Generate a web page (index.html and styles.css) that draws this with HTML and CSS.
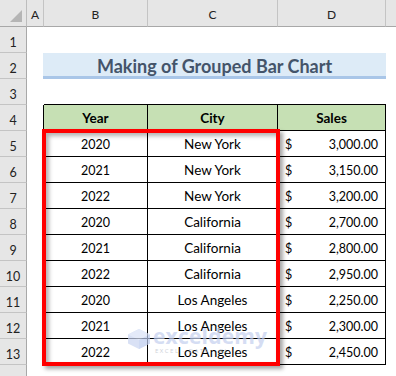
FILE: index.html
```html
<!DOCTYPE html>
<html>
<head>
<meta charset="utf-8">
<link rel="stylesheet" href="styles.css">
</head>
<body>
<div class="wrap">
  <div class="sheet">
    <div class="corner"><span class="tri"></span></div>
    <div class="ch">A</div><div class="ch">B</div><div class="ch">C</div><div class="ch">D</div><div class="ch last"></div>

    <div class="rh">1</div><div class="c"></div><div class="c"></div><div class="c"></div><div class="c"></div><div class="c"></div>
    <div class="rh">2</div><div class="c"></div>
    <div class="title">Making of Grouped Bar Chart</div>
    <div class="c"></div>
    <div class="rh">3</div><div class="c"></div><div class="c tb"></div><div class="c tb"></div><div class="c tb"></div><div class="c"></div>
    <div class="rh">4</div><div class="c tl"></div>
    <div class="t th">Year</div><div class="t th">City</div><div class="t th">Sales</div>
    <div class="c"></div>

    <div class="rh">5</div><div class="c tl"></div><div class="t">2020</div><div class="t txt">New York</div><div class="t money"><span>$</span><span>3,000.00</span></div><div class="c"></div>
    <div class="rh">6</div><div class="c tl"></div><div class="t">2021</div><div class="t txt">New York</div><div class="t money"><span>$</span><span>3,150.00</span></div><div class="c"></div>
    <div class="rh">7</div><div class="c tl"></div><div class="t">2022</div><div class="t txt">New York</div><div class="t money"><span>$</span><span>3,200.00</span></div><div class="c"></div>
    <div class="rh">8</div><div class="c tl"></div><div class="t">2020</div><div class="t txt">California</div><div class="t money"><span>$</span><span>2,700.00</span></div><div class="c"></div>
    <div class="rh">9</div><div class="c tl"></div><div class="t">2021</div><div class="t txt">California</div><div class="t money"><span>$</span><span>2,800.00</span></div><div class="c"></div>
    <div class="rh">10</div><div class="c tl"></div><div class="t">2022</div><div class="t txt">California</div><div class="t money"><span>$</span><span>2,950.00</span></div><div class="c"></div>
    <div class="rh">11</div><div class="c tl"></div><div class="t">2020</div><div class="t txt">Los Angeles</div><div class="t money"><span>$</span><span>2,250.00</span></div><div class="c"></div>
    <div class="rh">12</div><div class="c tl"></div><div class="t">2021</div><div class="t txt">Los Angeles</div><div class="t money"><span>$</span><span>2,300.00</span></div><div class="c"></div>
    <div class="rh">13</div><div class="c tl"></div><div class="t">2022</div><div class="t txt">Los Angeles</div><div class="t money"><span>$</span><span>2,450.00</span></div><div class="c"></div>
    <div class="rh"></div><div class="c"></div><div class="c"></div><div class="c"></div><div class="c"></div><div class="c"></div>
  </div>

  <div class="highlight"></div>

  <div class="watermark">
    <svg class="wm-logo" width="24" height="22" viewBox="0 0 24 22">
      <polygon points="12,1 23,6.5 23,15.5 12,21 1,15.5 1,6.5" fill="#c9d5f2"/>
      <polygon points="12,1 23,6.5 12,12 1,6.5" fill="#d9e2f7"/>
      <polygon points="12,12 23,6.5 23,15.5 12,21" fill="#bccbee"/>
    </svg>
    <div class="wm-text">
      <div class="wm-name">exceldemy</div>
      <div class="wm-sub">EXCEL · DATA · BI</div>
    </div>
  </div>
</div>
</body>
</html>
```

FILE: styles.css
```css
* { box-sizing: border-box; }

html, body {
  margin: 0;
  padding: 0;
  background: #ffffff;
}

.wrap {
  position: relative;
  width: 396px;
  height: 376px;
  overflow: hidden;
  font-family: Lato, "Open Sans", sans-serif;
  font-size: 12.5px;
  color: #000;
}

.sheet {
  display: grid;
  grid-template-columns: 27px 17px 104px 130px 108px 1fr;
  grid-template-rows: 27px repeat(14, 26px);
}

.corner {
  position: relative;
  background: #e6e6e6;
  border-right: 1px solid #bdbdbd;
  border-bottom: 1px solid #a8a8a8;
}
.tri {
  position: absolute;
  right: 4px;
  bottom: 4px;
  width: 0;
  height: 0;
  border-left: 12px solid transparent;
  border-bottom: 12px solid #b5b5b5;
}

.ch {
  background: #e6e6e6;
  border-right: 1px solid #c4c4c4;
  border-bottom: 1px solid #a8a8a8;
  display: flex;
  align-items: center;
  justify-content: center;
  padding-top: 3px;
  font-size: 12px;
  color: #222;
}
.ch.last { border-right: none; }

.rh {
  background: #e6e6e6;
  border-right: 1px solid #a8a8a8;
  border-bottom: 1px solid #c4c4c4;
  display: flex;
  align-items: center;
  justify-content: center;
  padding-top: 6px;
  font-size: 12.5px;
  color: #222;
}

.c { background: #fff; }
.c.tb { border-bottom: 1px solid #000; }
.c.tl { border-right: 1px solid #000; }

.title {
  grid-column: span 3;
  margin-left: -1px;
  background: #ddebf7;
  border-bottom: 3px solid #a9c6e8;
  display: flex;
  align-items: center;
  justify-content: center;
  padding-top: 2px;
  font-weight: 700;
  font-size: 18px;
  color: #44546a;
}

.t {
  border-right: 1px solid #000;
  border-bottom: 1px solid #000;
  display: flex;
  align-items: center;
  justify-content: center;
  padding-top: 1px;
}
.t.txt { font-size: 13.5px; }
.t.th {
  background: #c6e0b4;
  font-weight: 700;
  font-size: 13.5px;
}
.t.money {
  justify-content: space-between;
  padding-left: 7px;
  padding-right: 7px;
}

.highlight {
  position: absolute;
  left: 42px;
  top: 129px;
  width: 238px;
  height: 237px;
  border: 4px solid #ff0000;
  box-shadow: 3px 3px 4px rgba(0, 0, 0, 0.35), inset 3px 3px 4px rgba(0, 0, 0, 0.3);
  pointer-events: none;
}

.watermark {
  position: absolute;
  left: 127px;
  top: 326px;
  display: flex;
  align-items: flex-start;
  gap: 2px;
  opacity: 0.7;
  pointer-events: none;
}
.wm-logo { margin-top: 2px; }
.wm-name {
  font-family: "Open Sans", sans-serif;
  font-weight: 700;
  font-size: 21px;
  line-height: 21px;
  color: #c4d0ef;
  letter-spacing: 0.2px;
}
.wm-sub {
  font-family: "Open Sans", sans-serif;
  font-size: 6px;
  line-height: 8px;
  color: #b9bec9;
  letter-spacing: 1.5px;
  margin-left: 2px;
}
```
